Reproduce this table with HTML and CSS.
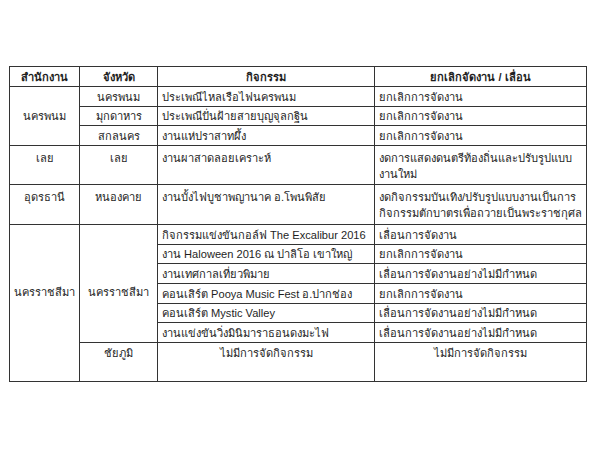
FILE: index.html
```html
<!DOCTYPE html>
<html lang="th">
<head>
<meta charset="utf-8">
<link rel="stylesheet" href="styles.css">
</head>
<body>
<div class="page">
<table class="events">
  <colgroup>
    <col class="c1"><col class="c2"><col class="c3"><col class="c4">
  </colgroup>
  <thead>
    <tr class="h-head">
      <th>สำนักงาน</th><th>จังหวัด</th><th>กิจกรรม</th><th>ยกเลิกจัดงาน / เลื่อน</th>
    </tr>
  </thead>
  <tbody>
    <tr class="h-row">
      <td rowspan="3" class="office center">นครพนม</td>
      <td class="center">นครพนม</td>
      <td>ประเพณีไหลเรือไฟนครพนม</td>
      <td>ยกเลิกการจัดงาน</td>
    </tr>
    <tr class="h-row19">
      <td class="center">มุกดาหาร</td>
      <td>ประเพณีปั่นฝ้ายสายบุญจุลกฐิน</td>
      <td>ยกเลิกการจัดงาน</td>
    </tr>
    <tr class="h-row">
      <td class="center">สกลนคร</td>
      <td>งานแห่ปราสาทผึ้ง</td>
      <td>ยกเลิกการจัดงาน</td>
    </tr>
    <tr class="h-loei">
      <td class="office top center">เลย</td>
      <td class="top center">เลย</td>
      <td class="top">งานผาสาดลอยเคราะห์</td>
      <td class="top">งดการแสดงดนตรีท้องถิ่นและปรับรูปแบบ<br>งานใหม่</td>
    </tr>
    <tr class="h-udon">
      <td class="office top center">อุดรธานี</td>
      <td class="top center">หนองคาย</td>
      <td class="top">งานบั้งไฟบูชาพญานาค อ.โพนพิสัย</td>
      <td class="top">งดกิจกรรมบันเทิง/ปรับรูปแบบงานเป็นการ<br>กิจกรรมตักบาตรเพื่อถวายเป็นพระราชกุศล</td>
    </tr>
    <tr class="h-row">
      <td rowspan="7" class="office korat-office center">นครราชสีมา</td>
      <td rowspan="6" class="korat-prov center">นครราชสีมา</td>
      <td>กิจกรรมแข่งขันกอล์ฟ The Excalibur 2016</td>
      <td>เลื่อนการจัดงาน</td>
    </tr>
    <tr class="h-row19">
      <td>งาน Haloween 2016 ณ ปาลิโอ เขาใหญ่</td>
      <td>ยกเลิกการจัดงาน</td>
    </tr>
    <tr class="h-row">
      <td>งานเทศกาลเที่ยวพิมาย</td>
      <td>เลื่อนการจัดงานอย่างไม่มีกำหนด</td>
    </tr>
    <tr class="h-row">
      <td>คอนเสิร์ต Pooya Music Fest อ.ปากช่อง</td>
      <td>ยกเลิกการจัดงาน</td>
    </tr>
    <tr class="h-row19">
      <td>คอนเสิร์ต Mystic Valley</td>
      <td>เลื่อนการจัดงานอย่างไม่มีกำหนด</td>
    </tr>
    <tr class="h-row">
      <td>งานแข่งขันวิ่งมินิมาราธอนดงมะไฟ</td>
      <td>เลื่อนการจัดงานอย่างไม่มีกำหนด</td>
    </tr>
    <tr class="h-chai">
      <td class="chai center">ชัยภูมิ</td>
      <td class="chai center">ไม่มีการจัดกิจกรรม</td>
      <td class="chai center">ไม่มีการจัดกิจกรรม</td>
    </tr>
  </tbody>
</table>
</div>
</body>
</html>
```
FILE: styles.css
```css
html, body {
  margin: 0;
  padding: 0;
  background: #ffffff;
}

.page {
  padding: 66px 0 0 9px;
}

.events {
  border-collapse: collapse;
  table-layout: fixed;
  width: 577px;
  font-family: "Liberation Sans", Arial, sans-serif;
  font-size: 11.1px;
  line-height: 18px;
  color: #1e1e1e;
}

.c1 { width: 70px; }
.c2 { width: 78px; }
.c3 { width: 217px; }
.c4 { width: 212px; }

.events th,
.events td {
  border: 1px solid #333333;
  padding: 0 4px;
  vertical-align: middle;
  white-space: nowrap;
  overflow: hidden;
  text-align: left;
}

.events th {
  font-weight: bold;
  text-align: center;
}

.events .center { text-align: center; }

.events .top {
  vertical-align: top;
  padding-top: 4px;
  line-height: 16px;
}

.events .chai {
  vertical-align: top;
  padding-top: 1px;
}

.events .office { padding-left: 1px; padding-right: 1px; }
.events .korat-office { padding-bottom: 22px; }
.events .korat-prov { padding-top: 16px; }

.h-head { height: 20px; }
.h-row { height: 20px; }
.h-row19 { height: 19px; }
.h-loei { height: 39px; }
.h-udon { height: 40px; }
.h-chai { height: 39px; }
```
